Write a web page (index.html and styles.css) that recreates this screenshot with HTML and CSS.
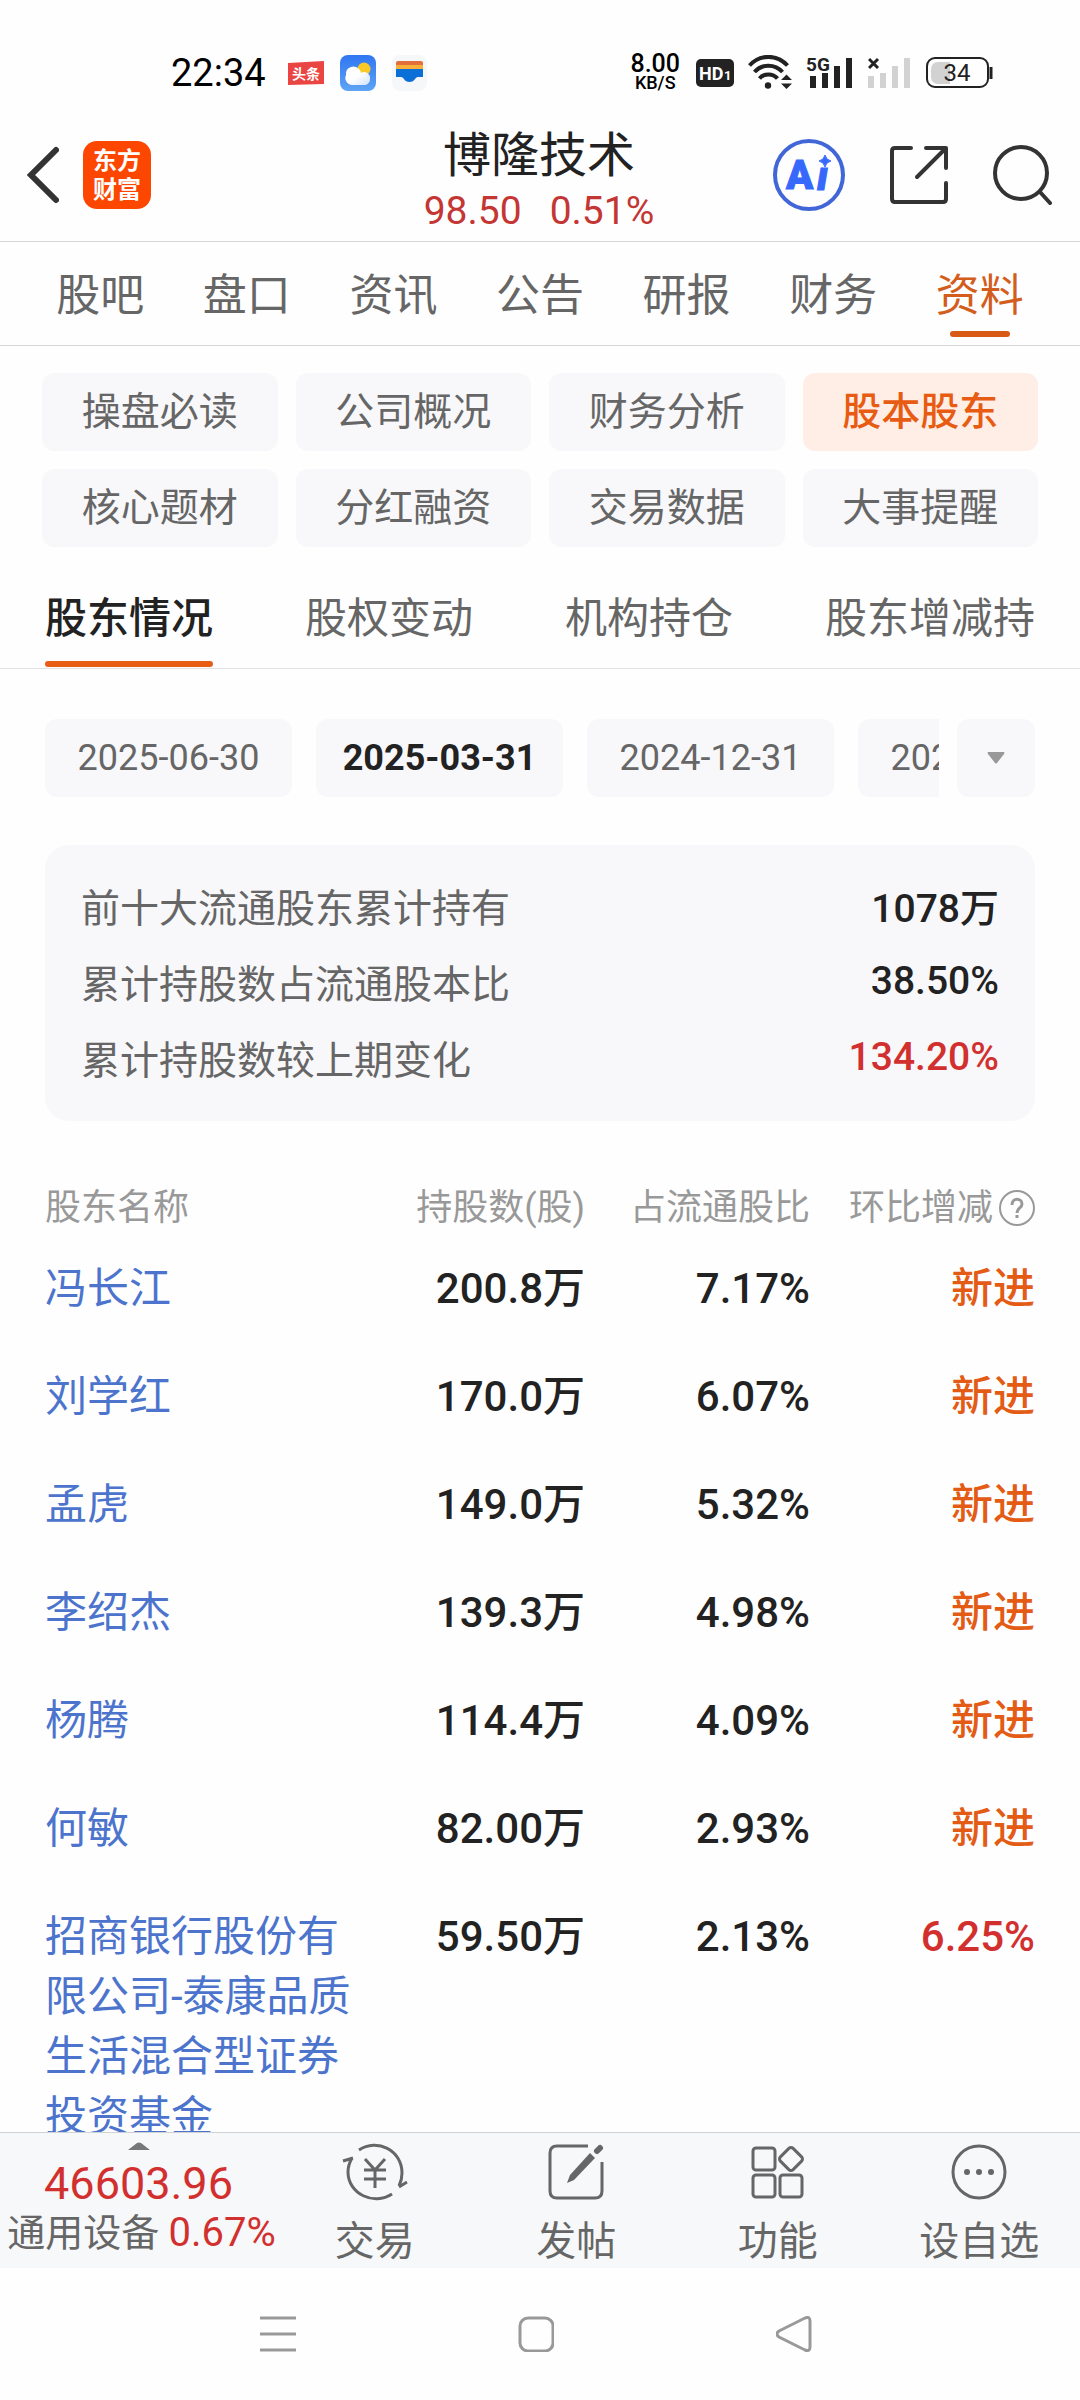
FILE: index.html
```html
<!DOCTYPE html>
<html lang="zh-CN">
<head>
<meta charset="utf-8">
<meta name="viewport" content="width=device-width, initial-scale=1">
<title>博隆技术 - 股本股东</title>
<link rel="stylesheet" href="styles.css">
</head>
<body>
<div class="status">
  <div class="status-left">
    <time class="clock">22:34</time>
    <svg class="app-ico" width="36" height="36" viewBox="0 0 36 36" role="img" aria-label="头条">
      <path d="M0 8 36 6V29L0 30Z" fill="#ea4543"/>
      <text x="18" y="24" text-anchor="middle" font-size="14" font-weight="700" fill="#fff">头条</text>
    </svg>
    <svg class="app-ico" width="36" height="36" viewBox="0 0 36 36" aria-hidden="true">
      <defs>
        <linearGradient id="sky" x1="0" y1="0" x2="0" y2="1"><stop offset="0" stop-color="#2f76f2"/><stop offset="1" stop-color="#5fa4f4"/></linearGradient>
        <linearGradient id="cloud" x1="0" y1="0" x2="1" y2="1"><stop offset=".5" stop-color="#fff"/><stop offset="1" stop-color="#cfe2fb"/></linearGradient>
      </defs>
      <rect width="36" height="36" rx="8" fill="url(#sky)"/>
      <circle cx="24" cy="14" r="6.500" fill="#fbc926"/>
      <path d="M12 30a7 7 0 0 1-6-10 7.500 7.500 0 0 1 13-6c2 2 2 4 2 4a6 6 0 0 1 9 6c0 4-3 6-6 6Z" fill="url(#cloud)"/>
    </svg>
    <svg class="app-ico" width="36" height="36" viewBox="0 0 36 36" aria-hidden="true">
      <rect width="35" height="36" rx="8" fill="#f6f7f9"/>
      <path d="M4 11V8a2 2 0 0 1 2-2h23a2 2 0 0 1 2 2v3Z" fill="#e2703a"/>
      <path d="M4 10H31V15H4Z" fill="#fbb03c"/>
      <path d="M4 14H31V22H26C23 22 23 27 17.500 27S12 22 9 22H4Z" fill="#0b6fd8"/>
    </svg>
  </div>
  <div class="status-right">
    <div class="speed"><span class="speed-num">8.00</span><span class="speed-unit">KB/S</span></div>
    <svg width="38" height="36" viewBox="0 0 38 36" role="img" aria-label="HD1">
      <rect y="4" width="38" height="28" rx="5" fill="#222"/>
      <text x="3" y="25" font-size="18" font-weight="700" fill="#fff">HD</text>
      <text x="28" y="25" font-size="13" font-weight="700" fill="#fff">1</text>
    </svg>
    <svg width="44" height="36" viewBox="0 0 44 36" aria-hidden="true" fill="none" stroke="#222" stroke-width="4">
      <path d="M1.500 10.500C12-1 29-1 39.500 10.500M6.500 17C14 8.500 27 8.500 34.500 17M11.500 23.500C16 18 25 18 29.500 23.500"/>
      <circle cx="20" cy="30.500" r="3.200" fill="#222" stroke="none"/>
      <path d="M33 25 38.500 19.500 44 25ZM33 28.500 38.500 34 44 28.500Z" fill="#222" stroke="none"/>
    </svg>
    <svg class="signal" width="48" height="36" viewBox="0 0 48 36" role="img" aria-label="5G">
      <text x="0" y="16" font-size="19" font-weight="700" fill="#222">5G</text>
      <path d="M4 21H10V33H4ZM16 18H22V33H16ZM28 11H34V33H28ZM40 3H46V33H40Z" fill="#222"/>
    </svg>
    <svg width="44" height="36" viewBox="0 0 44 36" aria-hidden="true">
      <path d="M1 4 10 13M10 4 1 13" stroke="#222" stroke-width="3"/>
      <path d="M0 21H6V33H0ZM12 18H18V33H12ZM24 11H30V33H24ZM36 3H42V33H36Z" fill="#d2d2d2"/>
    </svg>
    <svg width="68" height="36" viewBox="0 0 68 36" role="img" aria-label="34%">
      <path d="M12 7H24V29H12A7 7 0 0 1 5 22V14A7 7 0 0 1 12 7Z" fill="#d2d2d2"/>
      <rect x="1" y="3" width="61" height="29" rx="8" fill="none" stroke="#222" stroke-width="2"/>
      <path d="M65 12V24" stroke="#222" stroke-width="3"/>
      <text x="31" y="26" text-anchor="middle" font-size="24" fill="#222">34</text>
    </svg>
  </div>
</div>

<header class="header">
  <div class="header-side">
    <button class="icon-btn" aria-label="返回">
      <svg width="34" height="60" viewBox="0 0 34 60" fill="none" stroke="#333" stroke-width="6" stroke-linecap="round" stroke-linejoin="miter"><path d="M31 5 6 30 31 55"/></svg>
    </button>
    <svg width="68" height="68" viewBox="0 0 68 68" role="img" aria-label="东方财富">
      <rect width="68" height="68" rx="14" fill="#fd4600"/>
      <text x="34" y="28" text-anchor="middle" font-size="24" font-weight="700" fill="#fff">东方</text>
      <text x="34" y="57" text-anchor="middle" font-size="24" font-weight="700" fill="#fff">财富</text>
    </svg>
  </div>
  <div class="header-mid">
    <h1 class="stock">博隆技术</h1>
    <div class="quote"><span>98.50</span><span>0.51%</span></div>
  </div>
  <div class="header-side header-right">
    <button class="icon-btn" aria-label="Ai">
      <svg width="72" height="72" viewBox="0 0 72 72">
        <circle cx="36" cy="36" r="34" fill="none" stroke="#4166d8" stroke-width="4"/>
        <text x="13" y="50" font-size="40" font-weight="900" fill="#3568fb" stroke="#3568fb" stroke-width="1">A</text>
        <text x="44" y="51" font-size="40" font-weight="900" font-style="italic" fill="#3568fb" stroke="#3568fb" stroke-width="1">ı</text>
        <path d="M52 16Q53 21 58 22 53 23 52 28 51 23 46 22 51 21 52 16Z" fill="#3568fb" stroke="#3568fb"/>
      </svg>
    </button>
    <button class="icon-btn" aria-label="分享">
      <svg width="60" height="60" viewBox="0 0 60 60" fill="none" stroke="#333" stroke-width="4" stroke-linecap="round" stroke-linejoin="round"><path d="M22 3H6Q3 3 3 6V54Q3 57 6 57H54Q57 57 57 54V38M37 3H57V23M56 4 28 32"/></svg>
    </button>
    <button class="icon-btn" aria-label="搜索">
      <svg width="60" height="60" viewBox="0 0 60 60" fill="none" stroke="#333" stroke-width="4" stroke-linecap="round"><circle cx="28" cy="28" r="26"/><path d="M47 47 57 58"/></svg>
    </button>
  </div>
</header>

<nav class="tabs" aria-label="个股栏目">
  <a href="#">股吧</a><a href="#">盘口</a><a href="#">资讯</a><a href="#">公告</a><a href="#">研报</a><a href="#">财务</a><a href="#" class="on" aria-current="page">资料</a>
</nav>

<main class="content">
  <nav class="chips" aria-label="资料分类">
    <a href="#">操盘必读</a><a href="#">公司概况</a><a href="#">财务分析</a><a href="#" class="on">股本股东</a>
    <a href="#">核心题材</a><a href="#">分红融资</a><a href="#">交易数据</a><a href="#">大事提醒</a>
  </nav>

  <nav class="subtabs" aria-label="股本股东">
    <a href="#" class="on">股东情况</a><a href="#">股权变动</a><a href="#">机构持仓</a><a href="#">股东增减持</a>
  </nav>

  <div class="dates">
    <div class="date-list">
      <button>2025-06-30</button><button class="on">2025-03-31</button><button>2024-12-31</button><button>2024-09-30</button>
    </div>
    <button class="more" aria-label="更多日期">
      <svg width="18" height="12" viewBox="0 0 18 12"><path d="M1 0H17Q18 1 17 2L10 11Q9 12 8 11L1 2Q0 1 1 0Z" fill="#999"/></svg>
    </button>
  </div>

  <dl class="summary">
    <div><dt>前十大流通股东累计持有</dt><dd>1078万</dd></div>
    <div><dt>累计持股数占流通股本比</dt><dd class="percent">38.50%</dd></div>
    <div><dt>累计持股数较上期变化</dt><dd class="percent up">134.20%</dd></div>
  </dl>

  <table class="holders">
    <colgroup><col class="c-name"><col class="c-count"><col class="c-ratio"><col class="c-change"></colgroup>
    <thead>
      <tr><th scope="col">股东名称</th><th scope="col">持股数(股)</th><th scope="col">占流通股比</th>
        <th scope="col"><span class="with-help">环比增减<button class="icon-btn" aria-label="说明"><svg width="36" height="36" viewBox="0 0 36 36" fill="none" stroke="#999" stroke-width="2"><circle cx="18" cy="18" r="17"/><path d="M13 15C13 7 23 8 23 14 23 18 18 18 18 23" stroke-width="3"/><path d="M18 25V28" stroke-width="3"/></svg></button></span></th></tr>
    </thead>
    <tbody>
      <tr><td><a href="#">冯长江</a></td><td>200.8万</td><td>7.17%</td><td class="new">新进</td></tr>
      <tr><td><a href="#">刘学红</a></td><td>170.0万</td><td>6.07%</td><td class="new">新进</td></tr>
      <tr><td><a href="#">孟虎</a></td><td>149.0万</td><td>5.32%</td><td class="new">新进</td></tr>
      <tr><td><a href="#">李绍杰</a></td><td>139.3万</td><td>4.98%</td><td class="new">新进</td></tr>
      <tr><td><a href="#">杨腾</a></td><td>114.4万</td><td>4.09%</td><td class="new">新进</td></tr>
      <tr><td><a href="#">何敏</a></td><td>82.00万</td><td>2.93%</td><td class="new">新进</td></tr>
      <tr><td><a href="#">招商银行股份有限公司-泰康品质生活混合型证券投资基金</a></td><td>59.50万</td><td>2.13%</td><td class="up">6.25%</td></tr>
    </tbody>
  </table>
</main>

<footer class="toolbar">
  <button class="index">
    <svg width="22" height="8" viewBox="0 0 22 8" aria-hidden="true"><path d="M0 8 9 1Q11 0 13 1L22 8Z" fill="#777"/></svg>
    <span class="index-value">46603.96</span>
    <span class="index-line">通用设备 <b>0.67%</b></span>
  </button>
  <button class="tool">
    <svg width="66" height="60" viewBox="0 0 66 60" fill="none" stroke="#666" stroke-width="3"><path d="M17 8C35-4 60 8 60 31Q60 38 57 44M50 52C32 64 6 52 6 30Q6 23 10 16M1 19 11 16M57 45 65 40"/><path d="M23 17 33 28 43 17M33 28V46M22 28H44M22 37H44"/></svg>
    <span>交易</span>
  </button>
  <button class="tool">
    <svg width="56" height="60" viewBox="0 0 56 60" fill="none" stroke="#666" stroke-width="3"><path d="M40 4H9Q2 4 2 11V49Q2 56 9 56H47Q54 56 54 49V20"/><path d="M42 11 47 16 26 38 19 41 22 33Z" fill="#666" stroke="none"/><path d="M49 9 52 6" stroke-width="6" stroke-linecap="round"/></svg>
    <span>发帖</span>
  </button>
  <button class="tool">
    <svg width="54" height="60" viewBox="0 0 54 60" fill="none" stroke="#666" stroke-width="3"><rect x="2" y="6" width="22" height="22" rx="3"/><rect x="2" y="33" width="22" height="22" rx="3"/><rect x="29" y="33" width="22" height="22" rx="3"/><rect x="31" y="8" width="18" height="18" rx="3" transform="rotate(45 40 17)"/></svg>
    <span>功能</span>
  </button>
  <button class="tool">
    <svg width="58" height="60" viewBox="0 0 58 60" fill="none" stroke="#666" stroke-width="3"><circle cx="29" cy="30" r="26"/><g fill="#666" stroke="none"><circle cx="17" cy="30" r="3"/><circle cx="29" cy="30" r="3"/><circle cx="41" cy="30" r="3"/></g></svg>
    <span>设自选</span>
  </button>
</footer>

<nav class="sysnav" aria-label="系统导航">
  <button class="icon-btn" aria-label="最近任务"><svg width="36" height="36" viewBox="0 0 36 36" stroke="#999" stroke-width="3"><path d="M0 2H36M0 18H36M0 34H36"/></svg></button>
  <button class="icon-btn" aria-label="主屏幕"><svg width="36" height="36" viewBox="0 0 36 36" fill="none" stroke="#999" stroke-width="3"><rect x="2" y="2" width="33" height="33" rx="8"/></svg></button>
  <button class="icon-btn" aria-label="返回"><svg width="36" height="36" viewBox="0 0 36 36" fill="none" stroke="#999" stroke-width="3"><path d="M3 15 29 2Q34 0 34 5V31Q34 36 29 34L3 21Q-1 18 3 15Z"/></svg></button>
</nav>
</body>
</html>
```

FILE: styles.css
```css
:root {
  --ink: #222;
  --text: #666;
  --muted: #999;
  --soft: #f8f8fa;
  --line: #d6d6d6;
  --orange: #e35b14;
  --red: #d2302f;
  --blue: #4c74cd;
}

* { box-sizing: border-box; }

body {
  margin: 0;
  height: 100vh;
  display: flex;
  flex-direction: column;
  background: #fefefe;
  color: var(--ink);
  font-family: Roboto, "Noto Sans CJK SC", sans-serif;
}

a { color: inherit; text-decoration: none; }

button {
  margin: 0;
  padding: 0;
  border: 0;
  background: none;
  color: inherit;
  font: inherit;
}

svg { display: block; flex: none; }

.icon-btn { display: flex; }

/* status bar */
.status {
  flex: none;
  display: flex;
  justify-content: space-between;
  align-items: center;
  height: 108px;
  padding: 37px 86px 0 171px;
  color: #000;
}

.status-left, .status-right { display: flex; align-items: center; }
.status-left { gap: 16px; }
.status-right { gap: 14px; }
.signal { overflow: visible; }
.clock { margin-right: 6px; font-size: 38px; }
.speed { display: flex; flex-direction: column; align-items: center; margin-right: 2px; font-weight: 500; }
.speed-num { font-size: 25px; line-height: 20px; }
.speed-unit { font-size: 18px; line-height: 18px; }

/* title bar */
.header {
  flex: none;
  display: grid;
  grid-template-columns: 1fr auto 1fr;
  align-items: center;
  height: 134px;
  padding: 0 27px 0 25px;
  border-bottom: 1px solid var(--line);
}

.header-side { display: flex; align-items: center; gap: 24px; }
.header-right { justify-content: flex-end; gap: 44px; }
.header-mid { padding-top: 8px; text-align: center; }
.stock { margin: 0; font-size: 48px; line-height: 64px; font-weight: 400; }

.quote {
  display: flex;
  justify-content: center;
  gap: 28px;
  color: #c43634;
  font-size: 39px;
  line-height: 46px;
}

/* primary tabs */
.tabs {
  flex: none;
  display: grid;
  grid-template-columns: repeat(7, 1fr);
  height: 104px;
  padding: 0 27px;
  border-bottom: 1px solid var(--line);
  color: var(--text);
  font-size: 44px;
  text-align: center;
}

.tabs a { position: relative; padding-top: 6px; line-height: 97px; }
.tabs .on { color: #d35d1c; }

.tabs .on::after {
  content: "";
  position: absolute;
  left: 50%;
  bottom: 8px;
  width: 60px;
  height: 6px;
  margin-left: -30px;
  border-radius: 3px;
  background: #d75913;
}

.content {
  flex: 1;
  min-height: 0;
  overflow-y: auto;
  scrollbar-width: none;
}

/* category chips */
.chips {
  display: grid;
  grid-template-columns: repeat(4, 1fr);
  gap: 18px;
  padding: 27px 42px 0;
  color: var(--text);
  font-size: 39px;
  line-height: 78px;
  text-align: center;
}

.chips a { border-radius: 12px; background: var(--soft); }
.chips .on { background: #feeee6; color: #e85b12; font-weight: 500; }

/* secondary tabs */
.subtabs {
  display: flex;
  justify-content: space-between;
  margin-top: 22px;
  padding: 0 45px;
  border-bottom: 1px solid #e2e2e2;
  color: var(--text);
  font-size: 42px;
  line-height: 100px;
}

.subtabs a { position: relative; height: 99px; }
.subtabs .on { color: var(--ink); font-weight: 500; }

.subtabs .on::after {
  content: "";
  position: absolute;
  left: 0;
  right: 0;
  bottom: 1px;
  height: 6px;
  border-radius: 3px;
  background: #e85d16;
}

/* report dates */
.dates { display: flex; gap: 18px; padding: 50px 45px 0; }
.date-list { flex: 1; min-width: 0; display: flex; gap: 24px; overflow: hidden; }

.dates button {
  flex: none;
  width: 247px;
  height: 78px;
  border-radius: 12px;
  background: var(--soft);
  color: var(--text);
  font-size: 36px;
}

.dates .on { color: var(--ink); font-weight: 700; }
.dates .more { display: flex; align-items: center; justify-content: center; width: 78px; }

/* summary card */
.summary {
  margin: 48px 45px 0;
  padding: 26px 36px 22px;
  border-radius: 24px;
  background: var(--soft);
  font-size: 39px;
}

.summary div { display: flex; justify-content: space-between; line-height: 76px; }
.summary dt { color: var(--text); }
.summary dd { margin: 0; font-weight: 500; }
.summary .percent { line-height: 68px; }
.up { color: var(--red); }

/* shareholder table */
.holders {
  width: calc(100% - 90px);
  margin: 60px 45px 0;
  border-collapse: collapse;
  table-layout: fixed;
  font-size: 42px;
  line-height: 60px;
}

.c-name { width: 320px; }
.c-ratio, .c-change { width: 225px; }
.holders th, .holders td { padding: 24px 0; text-align: right; vertical-align: top; font-weight: 500; }
.holders th { padding: 0; color: var(--muted); font-size: 36px; line-height: 54px; font-weight: 400; }
.holders th:first-child, .holders td:first-child { text-align: left; font-weight: 400; }
.holders td a { color: var(--blue); }
.holders .new { color: var(--orange); }
.with-help { display: flex; align-items: center; justify-content: flex-end; gap: 6px; }

/* bottom toolbar */
.toolbar {
  flex: none;
  display: grid;
  grid-template-columns: 274px repeat(4, 1fr);
  height: 136px;
  border-top: 1px solid #d0d2d5;
  background: #f7f8fa;
  color: var(--text);
}

.index { display: flex; flex-direction: column; align-items: center; padding: 9px 0 0 3px; white-space: nowrap; }
.index-value { margin-top: 10px; color: var(--red); font-size: 45px; line-height: 48px; }
.index-line { padding-left: 6px; font-size: 38px; line-height: 50px; }
.index-line b { color: var(--red); font-size: 40px; font-weight: 400; }
.tool { display: flex; flex-direction: column; align-items: center; padding-top: 9px; font-size: 40px; }
.tool span { margin-top: 10px; line-height: 60px; }

/* system navigation */
.sysnav {
  flex: none;
  display: grid;
  grid-template-columns: repeat(3, 1fr);
  justify-items: center;
  align-items: center;
  height: 132px;
  padding: 0 157px 0 149px;
}
```
